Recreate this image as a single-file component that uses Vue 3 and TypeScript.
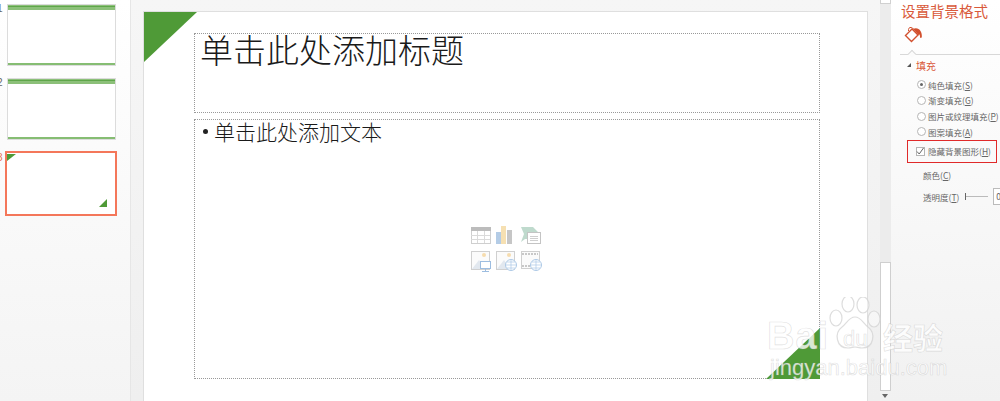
<template>
  <div class="window">
    <aside class="thumbs">
      <div v-for="n in 2" :key="n" class="thumb-row">
        <span class="num">{{ n }}</span>
        <div class="thumb">
          <div class="thumb-top"></div>
          <div class="thumb-bottom"></div>
        </div>
      </div>
      <div class="thumb-row active">
        <span class="num">3</span>
        <div class="thumb current">
          <svg class="corner-a" width="9" height="7" viewBox="0 0 9 7"><polygon points="0,0 9,0 0,7" fill="#4f9a37" /></svg>
          <svg class="corner-b" width="8" height="8" viewBox="0 0 8 8"><polygon points="8,0 8,8 0,8" fill="#4f9a37" /></svg>
        </div>
      </div>
    </aside>

    <main class="stage">
      <section class="slide">
        <svg class="tri-top" width="53" height="50" viewBox="0 0 53 50"><polygon points="0,0 53,0 0,50" fill="#4f9a37" /></svg>
        <div class="box title-box">单击此处添加标题</div>
        <div class="box body-box">
          <div class="bullet-line"><i class="dot"></i>单击此处添加文本</div>
          <div class="tools">
            <svg width="22" height="20" viewBox="0 0 22 20">
              <rect x="1.500" y="2.500" width="19" height="16" fill="#fff" stroke="#cfcfcf" />
              <rect x="1" y="2" width="20" height="4" fill="#bcbcbc" />
              <path d="M1 10.500h19M1 14.500h19M7.500 6v12M14.500 6v12" stroke="#dadada" fill="none" />
            </svg>
            <svg width="22" height="20" viewBox="0 0 22 20">
              <rect x="1" y="7" width="5" height="12" fill="#b4cce6" />
              <rect x="6" y="1" width="5" height="18" fill="#f6e0b2" />
              <rect x="12" y="5" width="5" height="14" fill="#c6c6c6" />
            </svg>
            <svg width="22" height="20" viewBox="0 0 22 20">
              <polygon points="1,2 13,2 18,7 8,7 8,14 5,14 1,17 4,9" fill="#bfdacd" />
              <rect x="7.500" y="7.500" width="13" height="11" fill="#fff" stroke="#c4c4c4" />
              <path d="M10 11.500h8M10 13.500h8M10 15.500h8" stroke="#cfcfcf" fill="none" />
            </svg>
            <svg width="22" height="22" viewBox="0 0 22 22">
              <rect x="1.500" y="1.500" width="18" height="18" fill="#fbfbfb" stroke="#d0d0d0" />
              <polygon points="2,19 9,10 15,19" fill="#e2e8ef" />
              <circle cx="14" cy="5" r="2" fill="#f6dcae" />
              <rect x="10.500" y="11.500" width="10" height="7" fill="#fff" stroke="#9dbde0" />
              <path d="M15.500 19v2M12 21.500h7" stroke="#9dbde0" fill="none" />
            </svg>
            <svg width="22" height="22" viewBox="0 0 22 22">
              <rect x="1.500" y="1.500" width="18" height="18" fill="#fbfbfb" stroke="#d0d0d0" />
              <polygon points="2,19 9,10 15,19" fill="#e2e8ef" />
              <circle cx="14" cy="5" r="2" fill="#f6dcae" />
              <circle cx="16" cy="15" r="5.500" fill="#fff" stroke="#adc9e6" />
              <path d="M10.500 15h11M16 9.500v11M12 12h8M12 18h8" stroke="#adc9e6" stroke-width=".7" fill="none" />
            </svg>
            <svg width="22" height="22" viewBox="0 0 22 22">
              <rect x="1.500" y="1.500" width="18" height="17" fill="#fbfbfb" stroke="#d0d0d0" />
              <path d="M2 4h16M2 16h16" stroke="#c8c8c8" stroke-width="2" stroke-dasharray="2 1" fill="none" />
              <circle cx="16" cy="15" r="5.500" fill="#fff" stroke="#adc9e6" />
              <path d="M10.500 15h11M16 9.500v11M12 12h8M12 18h8" stroke="#adc9e6" stroke-width=".7" fill="none" />
            </svg>
          </div>
        </div>
        <svg class="tri-bottom" width="54" height="51" viewBox="0 0 54 51"><polygon points="54,0 54,51 0,51" fill="#4f9a37" /></svg>
      </section>
    </main>

    <div class="scrollbar">
      <div class="thumb-top-bit"></div>
      <div class="track"></div>
      <div class="bar"></div>
      <div class="arrow"></div>
    </div>

    <aside class="panel">
      <h2 class="panel-title">设置背景格式</h2>
      <svg class="bucket" width="19" height="17" viewBox="0 0 19 17">
        <path d="M8 3 1.500 9.500 7.500 15.500 14 9 8 3Z" fill="#fff" stroke="#d2502e" stroke-width="1.400" />
        <path d="M4.500 5V3.500C4.500 1.500 7 .800 8.500 2L10 3.500" fill="none" stroke="#d2502e" />
        <path d="M9 3c3-1.500 6-.500 7.500 2 1.200 2 1.500 4 1.300 6.500l-1.600.5-.5-3.500-1.200.5L9 3Z" fill="#d2502e" />
      </svg>
      <div class="tab-line"></div>
      <div class="section-head"><i class="caret"></i>填充</div>
      <ul class="options">
        <li v-for="(o, i) in options" :key="o.key">
          <span class="radio" :class="{ on: i === 0 }"></span>{{ o.label }}(<u>{{ o.key }}</u>)
        </li>
      </ul>
      <div class="hide-box">
        <span class="check">
          <svg width="9" height="9" viewBox="0 0 9 9"><path d="M1 4.500 3.200 7 7.500 1" fill="none" stroke="#666" /></svg>
        </span>隐藏背景图形(<u>H</u>)
      </div>
      <div class="row color-row">颜色(<u>C</u>)</div>
      <div class="row alpha-row">透明度(<u>T</u>)<span class="slider"></span><span class="spin">0</span></div>
    </aside>

    <div class="watermark">
      <svg class="paw" width="54" height="56" viewBox="0 0 54 56">
        <g fill="rgba(255,255,255,.55)" stroke="#d6d6d6" stroke-width="1.200" opacity=".8">
          <ellipse cx="8" cy="21" rx="6" ry="8" />
          <ellipse cx="20" cy="7" rx="6" ry="8" />
          <ellipse cx="35" cy="8" rx="6" ry="8" />
          <ellipse cx="46" cy="22" rx="6" ry="8" />
          <path d="M27 20c-6 0-8 6-13 10-8 6-6 21 6 21 3 0 5-1 7-1s4 1 7 1c12 0 14-15 6-21-5-4-7-10-13-10Z" />
        </g>
      </svg>
      <span class="wm-big">Bai</span>
      <span class="wm-du">du</span>
      <span class="wm-cn">经验</span>
      <span class="wm-url">jingyan.baidu.com</span>
    </div>
  </div>
</template>

<script setup lang="ts">
interface FillOption {
  label: string
  key: string
}

const options: FillOption[] = [
  { label: '纯色填充', key: 'S' },
  { label: '渐变填充', key: 'G' },
  { label: '图片或纹理填充', key: 'P' },
  { label: '图案填充', key: 'A' }
]
</script>

<style>
html, body {
  margin: 0;
  overflow: hidden;
}
</style>

<style scoped>
.window {
  position: relative;
  display: flex;
  width: 1000px;
  height: 401px;
  overflow: hidden;
  font-family: "Noto Sans CJK SC", sans-serif;
}

.thumbs {
  width: 131px;
  flex-shrink: 0;
  box-sizing: border-box;
  padding-top: 4px;
  border-right: 1px solid #e6e6e6;
  background: linear-gradient(#fff, #f4f4f4);
}
.thumb-row {
  position: relative;
  display: flex;
  height: 74px;
  padding-left: 7px;
}
.thumb-row.active {
  margin-top: -1px;
  padding-left: 5px;
}
.num {
  position: absolute;
  left: -3px;
  top: -1px;
  font: 10px "Liberation Sans", sans-serif;
  color: #666;
}
.active .num {
  top: 1px;
  color: #e8704f;
}
.thumb {
  position: relative;
  width: 109px;
  height: 62px;
  box-sizing: border-box;
  background: #fff;
  border: 1px solid #dcdcdc;
}
.thumb.current {
  width: 112px;
  height: 65px;
  border: 2px solid #f4775a;
}
.thumb-top {
  height: 5px;
  background: linear-gradient(#8cc079 0 1px, #5fa64a 1px 2px, #8cc079 2px);
}
.thumb-bottom {
  position: absolute;
  left: 0;
  right: 0;
  bottom: 0;
  height: 2px;
  background: #86bd73;
}
.corner-a {
  position: absolute;
  left: 0;
  top: 1px;
}
.corner-b {
  position: absolute;
  right: 8px;
  bottom: 7px;
}

.stage {
  flex: 1;
  padding: 11px 12px 0 12px;
  background: linear-gradient(#f6f6f6, #efefef);
}
.slide {
  position: relative;
  height: 420px;
  box-sizing: border-box;
  padding: 21px 47px 0 50px;
  background: #fff;
  border: 1px solid #dfdfdf;
}
.tri-top {
  position: absolute;
  left: 0;
  top: 0;
}
.tri-bottom {
  position: absolute;
  left: 622px;
  top: 316px;
}
.box {
  border: 1px dotted #999;
  color: #1a1a1a;
  box-sizing: border-box;
}
.title-box {
  height: 80px;
  padding-left: 5px;
  font-size: 33px;
  line-height: 30px;
  font-weight: 300;
}
.body-box {
  height: 260px;
  margin-top: 6px;
  padding-left: 8px;
  font-size: 21px;
  font-weight: 300;
}
.bullet-line {
  display: flex;
  align-items: center;
  height: 22px;
}
.dot {
  width: 5px;
  height: 5px;
  margin-right: 6px;
  border-radius: 50%;
  background: #222;
}
.tools {
  display: grid;
  grid-template-columns: repeat(3, 22px);
  gap: 5px 3px;
  margin: 83px 0 0 267px;
}

.scrollbar {
  display: flex;
  flex-direction: column;
  width: 11px;
  flex-shrink: 0;
  box-sizing: border-box;
  background: #ececec;
}
.thumb-top-bit {
  height: 4px;
  box-sizing: border-box;
  background: #fff;
  border: 1px solid #d0d0d0;
  border-top: 0;
}
.track {
  flex: 0 0 258px;
}
.bar {
  flex: 1;
  background: #fff;
  border: 1px solid #cfcfcf;
}
.arrow {
  position: relative;
  height: 10px;
  background: #f1f1f1;
}
.arrow::after {
  content: "";
  position: absolute;
  left: 2px;
  top: 3px;
  border: 3px solid transparent;
  border-top: 4px solid #666;
  border-bottom: 0;
}

.panel {
  width: 109px;
  flex-shrink: 0;
  padding-left: 10px;
  box-sizing: border-box;
  background: linear-gradient(#fff, #f1f1f1);
  color: #666;
  font-size: 8.500px;
}
.panel-title {
  margin: 0;
  font-size: 14.500px;
  line-height: 21px;
  font-weight: 400;
  color: #d9593a;
  white-space: nowrap;
}
.bucket {
  display: block;
  margin: 5px 0 0 3px;
}
.tab-line {
  position: relative;
  height: 1px;
  margin: 11px 0 0 -1px;
  background: #d8d8d8;
}
.tab-line::after {
  content: "";
  position: absolute;
  left: 9px;
  top: -3px;
  width: 5px;
  height: 5px;
  background: #fbfbfb;
  border-left: 1px solid #d8d8d8;
  border-top: 1px solid #d8d8d8;
  transform: rotate(45deg);
}
.section-head {
  position: relative;
  display: flex;
  align-items: center;
  height: 14px;
  margin-top: 3px;
  padding-left: 15px;
  font-size: 10px;
  color: #d9593a;
}
.caret {
  position: absolute;
  left: 6px;
  top: 5px;
  border-left: 4px solid transparent;
  border-bottom: 4px solid #555;
}
.options {
  list-style: none;
  margin: 5px 0 0;
  padding: 0 0 0 16px;
}
.options li {
  display: flex;
  align-items: center;
  height: 15.670px;
  white-space: nowrap;
}
.radio {
  position: relative;
  width: 7px;
  height: 7px;
  margin-right: 2px;
  border: 1px solid #b5b5b5;
  border-radius: 50%;
  background: #fff;
  flex-shrink: 0;
}
.radio.on::after {
  content: "";
  position: absolute;
  left: 2px;
  top: 2px;
  width: 3px;
  height: 3px;
  border-radius: 50%;
  background: #666;
}
.hide-box {
  display: flex;
  align-items: center;
  width: 90px;
  height: 23px;
  box-sizing: border-box;
  margin-left: 6px;
  padding-left: 8px;
  border: 1.500px solid #e02a2a;
  white-space: nowrap;
}
.check {
  display: flex;
  width: 9px;
  height: 9px;
  box-sizing: border-box;
  margin-right: 3px;
  border: 1px solid #b5b5b5;
  background: #fff;
  flex-shrink: 0;
}
.check svg {
  flex-shrink: 0;
  margin: -1px;
}
.row {
  display: flex;
  align-items: center;
  padding-left: 22px;
  white-space: nowrap;
}
.color-row {
  height: 14px;
  margin-top: 5px;
}
.alpha-row {
  height: 14px;
  margin-top: 8px;
}
.slider {
  position: relative;
  width: 23px;
  height: 1px;
  margin: 0 5px 0 6px;
  background: #bbb;
  flex-shrink: 0;
}
.slider::before {
  content: "";
  position: absolute;
  left: 0;
  top: -3px;
  width: 1px;
  height: 7px;
  background: #666;
}
.spin {
  width: 16px;
  height: 15px;
  line-height: 15px;
  padding-left: 2px;
  border: 1px solid #bbb;
  background: #fff;
  flex-shrink: 0;
}

.watermark {
  position: absolute;
  left: 760px;
  top: 300px;
  width: 200px;
  height: 90px;
  color: rgba(255, 255, 255, .78);
  -webkit-text-stroke: .7px rgba(175, 175, 175, .38);
  font-family: "Liberation Sans", sans-serif;
  pointer-events: none;
}
.paw {
  position: absolute;
  left: 68px;
  top: -3px;
}
.wm-big {
  position: absolute;
  left: 7px;
  top: 15px;
  font-size: 38px;
  font-weight: 700;
  letter-spacing: 1px;
}
.wm-du {
  position: absolute;
  left: 83px;
  top: 26px;
  font-size: 22px;
}
.wm-cn {
  position: absolute;
  left: 123px;
  top: 14px;
  font: 700 30px "Noto Sans CJK SC", sans-serif;
}
.wm-url {
  position: absolute;
  left: 10px;
  top: 55px;
  font-size: 22px;
}
</style>
